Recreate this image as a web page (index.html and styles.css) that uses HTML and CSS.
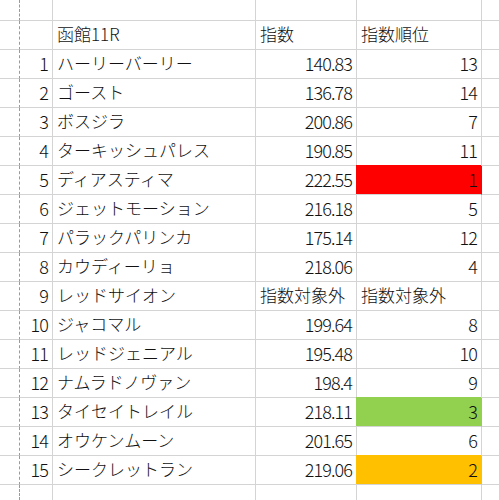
FILE: index.html
```html
<!DOCTYPE html>
<html lang="ja">
<head>
<meta charset="utf-8">
<link rel="stylesheet" href="styles.css">
</head>
<body>
<div class="sheet">
  <div class="c a"></div><div class="c"></div><div class="c"></div><div class="c"></div><div class="c"></div><div class="c e"></div>

  <div class="c a"></div><div class="c num"></div><div class="c txt">函館11R</div><div class="c txt">指数</div><div class="c txt">指数順位</div><div class="c e"></div>

  <div class="c a"></div><div class="c num">1</div><div class="c txt">ハーリーバーリー</div><div class="c num">140.83</div><div class="c num">13</div><div class="c e"></div>
  <div class="c a"></div><div class="c num">2</div><div class="c txt">ゴースト</div><div class="c num">136.78</div><div class="c num">14</div><div class="c e"></div>
  <div class="c a"></div><div class="c num">3</div><div class="c txt">ボスジラ</div><div class="c num">200.86</div><div class="c num">7</div><div class="c e"></div>
  <div class="c a"></div><div class="c num">4</div><div class="c txt">ターキッシュパレス</div><div class="c num">190.85</div><div class="c num">11</div><div class="c e"></div>
  <div class="c a"></div><div class="c num">5</div><div class="c txt">ディアスティマ</div><div class="c num">222.55</div><div class="c num fill red">1</div><div class="c e"></div>
  <div class="c a"></div><div class="c num">6</div><div class="c txt">ジェットモーション</div><div class="c num">216.18</div><div class="c num">5</div><div class="c e"></div>
  <div class="c a"></div><div class="c num">7</div><div class="c txt">パラックパリンカ</div><div class="c num">175.14</div><div class="c num">12</div><div class="c e"></div>
  <div class="c a"></div><div class="c num">8</div><div class="c txt">カウディーリョ</div><div class="c num">218.06</div><div class="c num">4</div><div class="c e"></div>
  <div class="c a"></div><div class="c num">9</div><div class="c txt">レッドサイオン</div><div class="c txt">指数対象外</div><div class="c txt">指数対象外</div><div class="c e"></div>
  <div class="c a"></div><div class="c num">10</div><div class="c txt">ジャコマル</div><div class="c num">199.64</div><div class="c num">8</div><div class="c e"></div>
  <div class="c a"></div><div class="c num">11</div><div class="c txt">レッドジェニアル</div><div class="c num">195.48</div><div class="c num">10</div><div class="c e"></div>
  <div class="c a"></div><div class="c num">12</div><div class="c txt">ナムラドノヴァン</div><div class="c num">198.4</div><div class="c num">9</div><div class="c e"></div>
  <div class="c a"></div><div class="c num">13</div><div class="c txt">タイセイトレイル</div><div class="c num">218.11</div><div class="c num fill green">3</div><div class="c e"></div>
  <div class="c a"></div><div class="c num">14</div><div class="c txt">オウケンムーン</div><div class="c num">201.65</div><div class="c num">6</div><div class="c e"></div>
  <div class="c a"></div><div class="c num">15</div><div class="c txt">シークレットラン</div><div class="c num">219.06</div><div class="c num fill orange">2</div><div class="c e"></div>

  <div class="c a last"></div><div class="c last"></div><div class="c last"></div><div class="c last"></div><div class="c last"></div><div class="c e last"></div>
</div>
</body>
</html>
```
FILE: styles.css
```css
html, body {
  margin: 0;
  padding: 0;
  background: #ffffff;
}

body {
  width: 499px;
  height: 500px;
  overflow: hidden;
}

.sheet {
  display: grid;
  grid-template-columns: 20px 33px 203px 101px 125px 1fr;
  grid-template-rows: 21px repeat(16, 29px) 1fr;
  height: 500px;
  font-family: "Noto Sans CJK JP", "Noto Sans", sans-serif;
  font-size: 17px;
  font-weight: 300;
  color: #111111;
}

.c {
  box-sizing: border-box;
  border-right: 1px solid #d4d4d4;
  border-bottom: 1px solid #d4d4d4;
  display: flex;
  align-items: center;
  white-space: nowrap;
  overflow: hidden;
  line-height: 1;
  padding-bottom: 3px;
}

.a {
  border-right: 1px dashed #9a9a9a;
}

.e {
  border-right: none;
}

.last {
  border-bottom: none;
}

.txt {
  justify-content: flex-start;
  padding-left: 4px;
}

.num {
  justify-content: flex-end;
  padding-right: 4px;
  font-size: 18px;
  letter-spacing: -0.9px;
}

.fill {
  background: var(--fill);
  border-right-color: var(--fill);
  box-shadow: -1px -1px 0 var(--fill);
}

.red { --fill: #ff0000; }
.green { --fill: #92d050; }
.orange { --fill: #ffc000; }
```
